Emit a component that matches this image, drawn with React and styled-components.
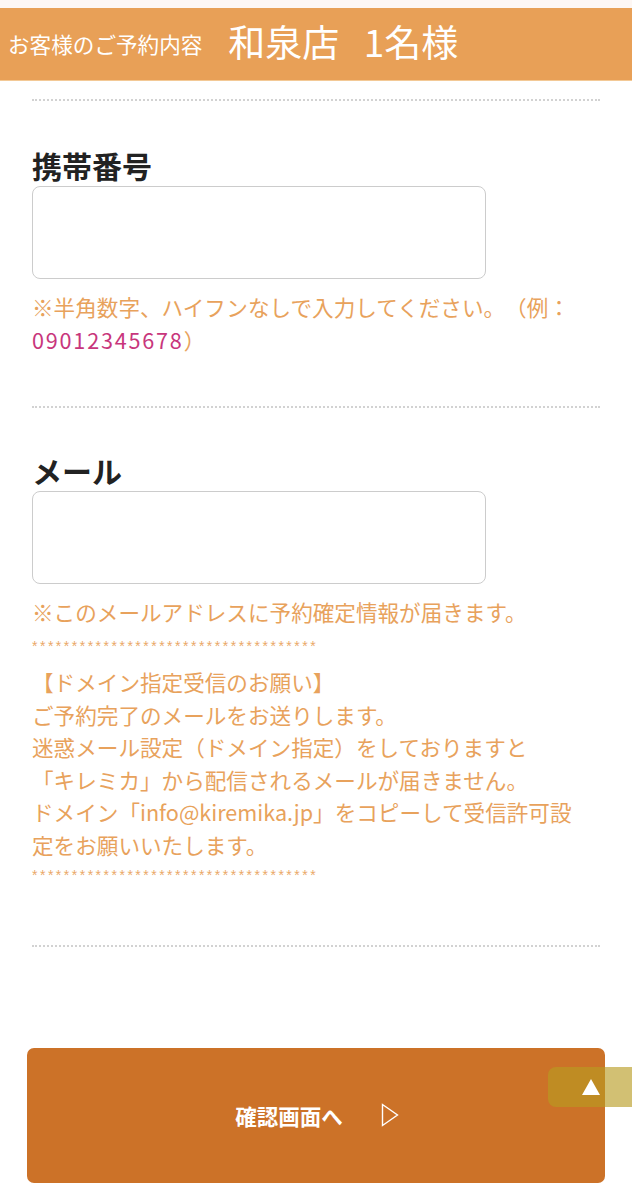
import React from "react";
import styled, { createGlobalStyle } from "styled-components";

const Global = createGlobalStyle`
  html, body { margin: 0; padding: 0; background: #ffffff; }
  body {
    font-family: "Noto Sans CJK JP", "Noto Sans", sans-serif;
    text-spacing-trim: space-all;
  }
  * { box-sizing: border-box; }
`;

const Page = styled.div`
  position: relative;
  width: 632px;
  min-height: 1200px;
  overflow: hidden;
  background: #ffffff;
`;

const TopStrip = styled.div`
  height: 8px;
  background: #fdf7f4;
`;

const Header = styled.header`
  height: 73px;
  background: #e8a057;
  border-bottom: 1px solid #f3c996;
  display: flex;
  align-items: center;
  padding: 0 0 6px 8px;
  color: #ffffff;
`;

const HeaderSmall = styled.span`
  font-size: 21.6px;
  line-height: 1;
  font-weight: 400;
  margin-top: 6px;
`;

const HeaderBig = styled.span`
  font-size: 37px;
  line-height: 1;
  font-weight: 400;
  margin-left: 26px;
  word-spacing: 16px;
`;

const Main = styled.main`
  padding: 0 32px;
`;

const Divider = styled.div`
  height: 0;
  border-top: 2px dotted #d2d2d2;
  margin-top: ${(p) => p.$top}px;
`;

const Field = styled.section`
  padding-top: ${(p) => p.$pad}px;
`;

const Label = styled.h2`
  margin: 0;
  font-size: 30px;
  line-height: 36px;
  font-weight: 700;
  color: #222222;
`;

const Input = styled.input`
  display: block;
  width: 454px;
  height: 93px;
  margin-top: 3px;
  border: 1.5px solid #cccccc;
  border-radius: 8px;
  background: #ffffff;
  outline: none;
`;

const Note = styled.p`
  margin: 11px 0 0;
  font-size: 21.6px;
  line-height: 33px;
  color: #e8a25c;
`;

const Pink = styled.span`
  color: #c8367c;
  letter-spacing: 1.8px;
`;

const Stars = styled.div`
  margin-top: ${(p) => p.$top}px;
  font-family: "Liberation Sans", sans-serif;
  font-size: 14px;
  line-height: 16px;
  height: 16px;
  letter-spacing: 2.5px;
  color: #eaa868;
  white-space: nowrap;
  overflow: hidden;
`;

const Notice = styled.div`
  margin-top: 12px;
  padding-right: 12px;
  font-size: 21.6px;
  line-height: 32.6px;
  color: #e8a25c;
`;

const Line = styled.div``;

const SubmitButton = styled.button`
  display: flex;
  align-items: center;
  justify-content: center;
  gap: 38px;
  width: 578px;
  height: 135px;
  margin: 101px 0 0 -5px;
  padding: 0 0 0 2px;
  border: none;
  border-radius: 7px;
  background: #cc7228;
  color: #ffffff;
  font-family: "Noto Sans CJK JP", sans-serif;
  font-size: 21.5px;
  font-weight: 700;
  cursor: pointer;
`;

const PageTop = styled.div`
  position: absolute;
  left: 548px;
  top: 1067px;
  width: 100px;
  height: 40px;
  border-radius: 8px 0 0 8px;
  background: rgba(183, 155, 33, 0.63);
  display: flex;
  align-items: center;
  padding-left: 34px;
`;

const stars = "*".repeat(36);

export default function App() {
  return (
    <Page>
      <Global />
      <TopStrip />
      <Header>
        <HeaderSmall>お客様のご予約内容</HeaderSmall>
        <HeaderBig>和泉店 1名様</HeaderBig>
      </Header>
      <Main>
        <Divider $top={18} />
        <Field $pad={46}>
          <Label>携帯番号</Label>
          <Input type="tel" />
          <Note>
            ※半角数字、ハイフンなしで入力してください。（例：<Pink>09012345678</Pink>）
          </Note>
        </Field>
        <Divider $top={50} />
        <Field $pad={44}>
          <Label>メール</Label>
          <Input type="email" />
          <Note>※このメールアドレスに予約確定情報が届きます。</Note>
          <Stars $top={10}>{stars}</Stars>
          <Notice>
            <Line>【ドメイン指定受信のお願い】</Line>
            <Line>ご予約完了のメールをお送りします。</Line>
            <Line>迷惑メール設定（ドメイン指定）をしておりますと</Line>
            <Line>「キレミカ」から配信されるメールが届きません。</Line>
            <Line>ドメイン「info@kiremika.jp」をコピーして受信許可設定をお願いいたします。</Line>
          </Notice>
          <Stars $top={5}>{stars}</Stars>
        </Field>
        <Divider $top={62} />
        <SubmitButton type="button">
          <span>確認画面へ</span>
          <svg width="18" height="24" viewBox="0 0 18 24" aria-hidden="true">
            <path d="M1.5 1.5 L16.5 12 L1.5 22.5 Z" fill="none" stroke="#ffffff" strokeWidth="1.4" strokeLinejoin="miter" />
          </svg>
        </SubmitButton>
      </Main>
      <PageTop>
        <svg width="18" height="16" viewBox="0 0 18 16" aria-hidden="true">
          <path d="M9 0 L18 16 L0 16 Z" fill="#ffffff" />
        </svg>
      </PageTop>
    </Page>
  );
}
